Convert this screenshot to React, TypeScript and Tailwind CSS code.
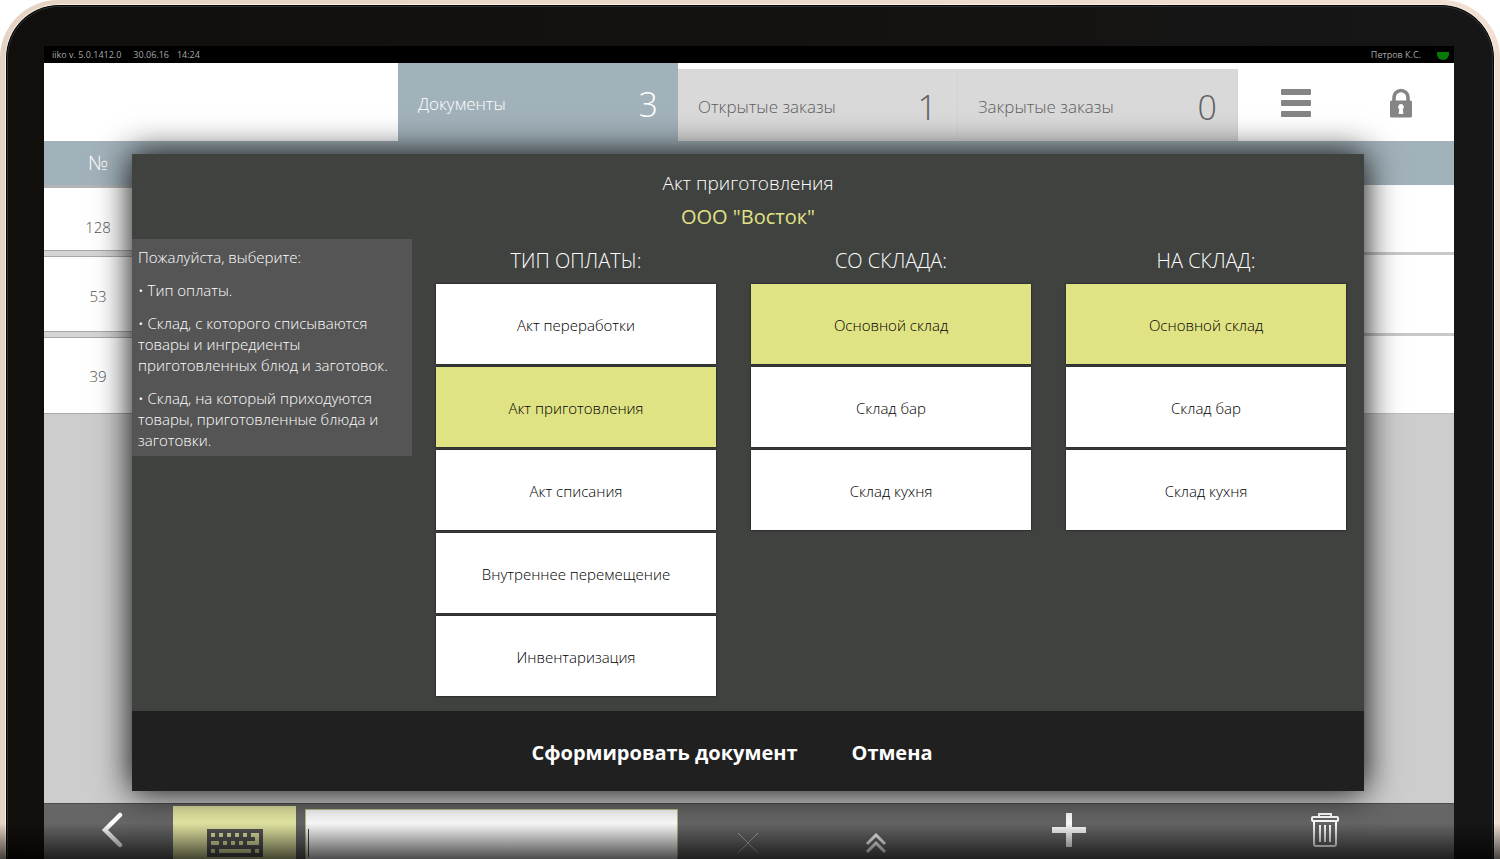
import { useState } from "react";
import clsx from "clsx";

// POS terminal: document list in the background, "new document" dialog on top.

const tabs = [
  { label: "Документы", count: 3, active: true },
  { label: "Открытые заказы", count: 1, active: false },
  { label: "Закрытые заказы", count: 0, active: false },
];

const columns = [
  {
    title: "Тип оплаты:",
    selected: "Акт приготовления",
    options: [
      "Акт переработки",
      "Акт приготовления",
      "Акт списания",
      "Внутреннее перемещение",
      "Инвентаризация",
    ],
  },
  {
    title: "Со склада:",
    selected: "Основной склад",
    options: ["Основной склад", "Склад бар", "Склад кухня"],
  },
  {
    title: "На склад:",
    selected: "Основной склад",
    options: ["Основной склад", "Склад бар", "Склад кухня"],
  },
];

export default function App() {
  return (
    <div className="h-screen overflow-hidden bg-white font-['Open_Sans','Noto_Sans',sans-serif]">
      {/* Tablet frame: gold rim, thin highlight, black bezel */}
      <div className="relative h-full overflow-hidden rounded-t-[58px] bg-gradient-to-r from-[#e5d3c4] to-[#f0dfd3] px-[5px] pt-1">
        <div className="h-full rounded-t-[54px] border-x border-t border-[#fdf0e0] bg-black p-px pb-0">
          <div className="h-full rounded-t-[52px] border-x border-t border-[#2a3234] bg-gradient-to-r from-[#120e0b] to-[#161616] pt-[39px] pr-[38px] pl-9">
            <main className="relative flex h-full flex-col bg-[#cdcdcd]">
              <StatusBar />
              <Tabs />
              <Documents />
              <BottomBar />
              <DocumentDialog />
            </main>
          </div>
        </div>
        <div className="pointer-events-none absolute inset-x-0 bottom-0 h-9 bg-gradient-to-b from-transparent to-black/70" />
      </div>
    </div>
  );
}

function StatusBar() {
  return (
    <div className="flex h-[17px] shrink-0 items-center bg-black pr-[5px] pl-2 text-[9px] leading-4 text-[#a8a8a8]">
      <span>iiko v. 5.0.1412.0</span>
      <span className="ml-3">30.06.16</span>
      <span className="ml-2">14:24</span>
      <span className="ml-auto">Петров К.С.</span>
      <span className="mt-0.5 ml-4 h-2 w-3 rounded-b-full bg-[#087a08]" />
    </div>
  );
}

function Tabs() {
  return (
    <header className="flex h-[78px] shrink-0 items-end justify-end bg-white">
      {tabs.map((tab) => (
        <button
          key={tab.label}
          className={clsx(
            "flex w-[280px] items-center justify-between px-5 pt-1 font-light",
            tab.active
              ? "h-full bg-[#a2b2ba] text-white"
              : "h-[72px] border-r border-[#d3d3d3] bg-[#d9d9d9] text-[#606060]",
          )}
        >
          <span className="text-[17px]">{tab.label}</span>
          <span className="text-[34px]">{tab.count}</span>
        </button>
      ))}
      <button aria-label="Меню" className="flex h-full w-29 items-center justify-center pt-0.5">
        <svg viewBox="0 0 30 28" className="h-7 w-[30px] fill-[#858585]">
          <rect y="0" width="30" height="6" rx="1" />
          <rect y="11" width="30" height="6" rx="1" />
          <rect y="22" width="30" height="6" rx="1" />
        </svg>
      </button>
      <button aria-label="Заблокировать" className="flex h-full w-25 items-center justify-center pt-0.5 pr-1.5">
        <svg viewBox="0 0 24 30" className="h-[30px] w-6">
          <path d="M5 15V9.500a7 7 0 0 1 14 0V15" fill="none" stroke="#858585" strokeWidth="3.600" />
          <rect x="1" y="12.500" width="22" height="17" rx="1.500" fill="#858585" />
          <path d="M12 16a3 3 0 0 0-1.800 5.300L9.600 26h4.800l-.6-4.700A3 3 0 0 0 12 16Z" fill="#fff" />
        </svg>
      </button>
    </header>
  );
}

function Documents() {
  return (
    <div className="min-h-0 flex-1">
      <table className="w-full border-separate border-spacing-0 text-[15px] font-light text-[#555]">
        <thead>
          <tr className="h-[44px] bg-[#a2b2ba] text-white">
            <th className="w-27 p-0 text-xl leading-5 font-light">№</th>
            <th className="p-0" />
          </tr>
        </thead>
        <tbody>
          <tr className="h-[65px] bg-white">
            <td className="border-t-[3px] border-[#b4b4b4] p-0 pt-4 text-center">128</td>
            <td className="p-0" />
          </tr>
          <RowGap />
          <tr className="h-[74px] bg-white">
            <td className="p-0 pt-1 text-center">53</td>
            <td className="p-0" />
          </tr>
          <RowGap />
          <tr className="h-[76px] bg-white">
            <td className="border-b border-[#a8a8a8] p-0 pt-0.5 text-center">39</td>
            <td className="border-b border-[#bdbdbd] p-0" />
          </tr>
        </tbody>
      </table>
    </div>
  );
}

// Wide gap under the number column, a thin rule under the rest of the row.
function RowGap() {
  return (
    <tr aria-hidden className="h-[7px] bg-white">
      <td className="border-y border-[#a8a8a8] bg-[#d4d4d4] p-0" />
      <td className="p-0">
        <div className="h-[3px] bg-[#c8c8c8]" />
      </td>
    </tr>
  );
}

function BottomBar() {
  return (
    <footer className="flex h-14 shrink-0 overflow-hidden border-t border-[#4d4d4d] bg-[#666]">
      <button aria-label="Назад" className="flex w-[129px] shrink-0 items-start justify-center pt-2 pl-1.5">
        <svg viewBox="0 0 24 36" className="h-9 w-6">
          <path d="M20 3 5 18l15 15" fill="none" stroke="#fff" strokeWidth="4.500" strokeLinecap="round" />
        </svg>
      </button>
      <button
        aria-label="Клавиатура"
        className="mt-0.5 flex w-[123px] shrink-0 items-start justify-center bg-[#e4e6a2] pt-[23px]"
      >
        <svg viewBox="0 0 56 28" className="h-7 w-14">
          <rect width="56" height="28" fill="#555556" />
          <path
            fill="#e4e6a2"
            d="M4 4h4v4H4zM12 4h4v4h-4zM20 4h4v4h-4zM28 4h4v4h-4zM36 4h4v4h-4zM44 4h8v12H40v-4h8V8h-4zM4 12h8v4H4zM16 12h4v4h-4zM24 12h4v4h-4zM32 12h4v4h-4zM4 20h4v4H4zM12 20h32v4H12zM48 20h4v4h-4z"
          />
        </svg>
      </button>
      <div className="relative mt-[5px] ml-[9px] w-[373px] shrink-0">
        <input
          aria-label="Поиск"
          className="h-16 w-full border border-[#b9bb83] bg-[#fbfbfb] px-2 text-lg outline-none"
        />
        {/* resting text cursor */}
        <span className="absolute top-5 left-[3px] h-7 w-px bg-[#444]" />
      </div>
      <div className="grid flex-1 grid-cols-[140fr_116fr_270fr_242fr] items-start pr-2">
        <button aria-label="Очистить" className="pt-7">
          <svg viewBox="0 0 22 22" className="mx-auto size-[22px]">
            <path d="M1 1 21 21M21 1 1 21" stroke="#b0b0b0" />
          </svg>
        </button>
        <button aria-label="Вверх" className="pt-7">
          <svg viewBox="0 0 22 22" className="mx-auto size-[22px]">
            <path d="m2 12 9-9 9 9M2 20l9-9 9 9" fill="none" stroke="#fff" strokeWidth="3" />
          </svg>
        </button>
        <button aria-label="Добавить" className="pt-2">
          <svg viewBox="0 0 36 36" className="mx-auto size-9">
            <path d="M18 1v34M1 18h34" stroke="#fff" strokeWidth="6" />
          </svg>
        </button>
        <button aria-label="Удалить" className="pt-2">
          <svg viewBox="0 0 28 36" className="mx-auto h-9 w-7" fill="none" stroke="#fff" strokeWidth="2">
            <path d="M8 5V2h12v3" />
            <rect x="1" y="5" width="26" height="4" rx="1" />
            <path d="M3 9v23q0 2 2 2h18q2 0 2-2V9M9 13v17M14 13v17M19 13v17" />
          </svg>
        </button>
      </div>
    </footer>
  );
}

function DocumentDialog() {
  const [selected, setSelected] = useState(columns.map((c) => c.selected));

  return (
    <section
      role="dialog"
      aria-labelledby="dialog-title"
      className="absolute top-[108px] right-[90px] bottom-[68px] left-22 flex flex-col bg-[#404240] shadow-[0_0_32px_1px_rgba(0,0,0,0.95)]"
    >
      <div className="pt-3 text-center leading-[34px]">
        <h1 id="dialog-title" className="text-[19px] font-light text-white">
          Акт приготовления
        </h1>
        <p className="text-xl leading-[34px] text-[#e0e384]">ООО "Восток"</p>
      </div>

      <div className="flex flex-1 items-start pt-[5px] pr-[18px]">
        <div className="flex w-[280px] shrink-0 flex-col gap-3 bg-[#555] px-1.5 pt-2 pb-[5px] text-[15px] leading-[21px] font-light text-white">
          <p>Пожалуйста, выберите:</p>
          <p>• Тип оплаты.</p>
          <p>• Склад, с которого списываются товары и ингредиенты приготовленных блюд и заготовок.</p>
          <p>• Склад, на который приходуются товары, приготовленные блюда и заготовки.</p>
        </div>

        <div className="ml-6 grid flex-1 grid-cols-3 gap-[35px]">
          {columns.map((column, i) => (
            <div key={column.title} className="flex flex-col gap-[3px]">
              <h2 className="pt-1 pb-0.5 text-center text-xl leading-9 font-light text-white uppercase">
                {column.title}
              </h2>
              {column.options.map((option) => (
                <button
                  key={option}
                  onClick={() => setSelected(selected.map((s, n) => (n === i ? option : s)))}
                  className={clsx(
                    "h-20 pt-0.5 text-[15px] font-light text-black shadow-[0_0_2px_#111]",
                    selected[i] === option ? "bg-[#e0e384]" : "bg-white",
                  )}
                >
                  {option}
                </button>
              ))}
            </div>
          ))}
        </div>
      </div>

      <div className="flex h-20 shrink-0 items-center justify-center gap-[54px] bg-[#202020] pt-1 pr-8 text-xl font-bold text-white">
        <button>Сформировать документ</button>
        <button>Отмена</button>
      </div>
    </section>
  );
}
